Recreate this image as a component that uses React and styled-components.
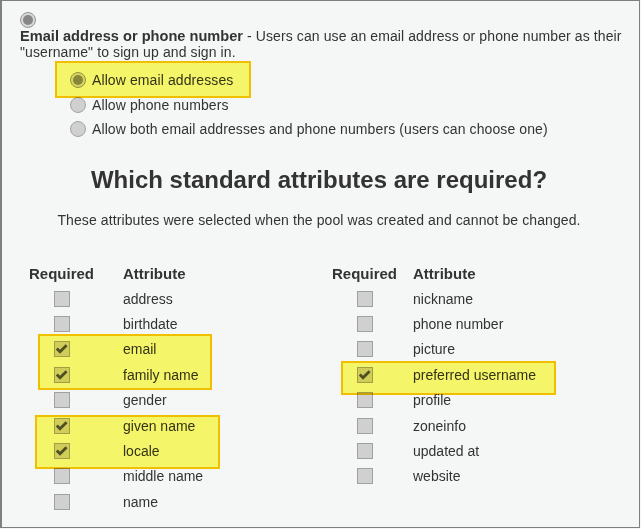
import React from "react";
import styled, { createGlobalStyle } from "styled-components";

const Global = createGlobalStyle`
  html, body { margin: 0; padding: 0; background: #f5f7f7; }
  * { box-sizing: border-box; }
`;

const Frame = styled.div`
  width: 640px;
  height: 528px;
  border: 1px solid #7f7f7f;
  border-left-width: 2px;
  background: #f5f7f7;
  padding: 11px 21px 0 18px;
  color: #333;
  font-family: "Liberation Sans", Arial, sans-serif;
  font-size: 14px;
  letter-spacing: 0.1px;
  overflow: hidden;
`;

const RadioDot = styled.span`
  display: ${(p) => (p.$block ? "flex" : "inline-flex")};
  align-items: center;
  justify-content: center;
  flex: none;
  width: 16px;
  height: 16px;
  border-radius: 50%;
  border: 1px solid ${(p) => (p.$checked ? "#969696" : "#a3a3a3")};
  background: ${(p) => (p.$checked ? "#d8d8d8" : "#d0d0d0")};
  &::after {
    content: "";
    display: ${(p) => (p.$checked ? "block" : "none")};
    width: 10px;
    height: 10px;
    border-radius: 50%;
    background: #878787;
  }
`;

const Intro = styled.p`
  margin: 0 -10px 0 0;
  line-height: 16px;
`;

const Lead = styled.b`
  font-size: 14.6px;
  letter-spacing: 0;
`;

const Options = styled.div`
  margin: 8px 0 0 50px;
  display: flex;
  flex-direction: column;
`;

const Option = styled.label`
  display: flex;
  align-items: center;
  gap: 6px;
  height: 24.5px;
  width: fit-content;
`;

const Highlight = styled.div`
  position: relative;
  &::after {
    content: "";
    position: absolute;
    top: ${(p) => p.$top}px;
    left: ${(p) => p.$left}px;
    width: ${(p) => p.$width}px;
    height: ${(p) => p.$height}px;
    background: rgb(255, 253, 109);
    border: 2px solid rgb(250, 198, 0);
    mix-blend-mode: multiply;
    pointer-events: none;
  }
`;

const Heading = styled.h2`
  margin: 24px 0 0;
  font-size: 24px;
  line-height: 28px;
  font-weight: bold;
  letter-spacing: 0;
  text-align: center;
`;

const Subtitle = styled.p`
  margin: 18px 0 0;
  line-height: 16px;
  text-align: center;
`;

const Tables = styled.div`
  margin-top: 33px;
  padding-left: 9px;
  display: grid;
  grid-template-columns: 303px 1fr;
`;

const Table = styled.div`
  display: flex;
  flex-direction: column;
`;

const Row = styled.div`
  display: grid;
  grid-template-columns: 65px auto;
  column-gap: ${(p) => p.$gap}px;
  align-items: center;
  height: 25.4px;
  white-space: nowrap;
  letter-spacing: 0;
`;

const HeadCell = styled.span`
  font-size: 15px;
  font-weight: bold;
`;

const Box = styled.span`
  justify-self: center;
  width: 16px;
  height: 16px;
  border: 1px solid #a0a0a0;
  background: #d0d0d0;
  display: flex;
  align-items: center;
  justify-content: center;
`;

const Check = ({ checked }) => (
  <Box>
    {checked && (
      <svg width="14" height="14" viewBox="0 0 14 14">
        <path d="M1.8 6.6 L5 9.8 L11.6 3.2" fill="none" stroke="#4f4f4f" strokeWidth="2.8" />
      </svg>
    )}
  </Box>
);

const AttrRow = ({ name, checked, gap }) => (
  <Row $gap={gap}>
    <Check checked={checked} />
    <span>{name}</span>
  </Row>
);

const AttrTable = ({ gap, groups }) => (
  <Table>
    <Row $gap={gap}>
      <HeadCell>Required</HeadCell>
      <HeadCell>Attribute</HeadCell>
    </Row>
    {groups.map((g, i) => {
      const rows = g.items.map((it) => (
        <AttrRow key={it} name={it} checked={!!g.mark} gap={gap} />
      ));
      return g.mark ? (
        <Highlight key={i} {...g.mark}>
          {rows}
        </Highlight>
      ) : (
        <React.Fragment key={i}>{rows}</React.Fragment>
      );
    })}
  </Table>
);

const leftGroups = [
  { items: ["address", "birthdate"] },
  { items: ["email", "family name"], mark: { $top: -3, $left: 9, $width: 170, $height: 52 } },
  { items: ["gender"] },
  { items: ["given name", "locale"], mark: { $top: 2, $left: 6, $width: 181, $height: 50 } },
  { items: ["middle name", "name"] },
];

const rightGroups = [
  { items: ["nickname", "phone number", "picture"] },
  { items: ["preferred username"], mark: { $top: -1.5, $left: 9, $width: 211, $height: 30 } },
  { items: ["profile", "zoneinfo", "updated at", "website"] },
];

export default function App() {
  return (
    <>
      <Global />
      <Frame>
        <RadioDot $checked $block />
        <Intro>
          <Lead>Email address or phone number</Lead> - Users can use an email address or phone
          number as their "username" to sign up and sign in.
        </Intro>
        <Options>
          <Highlight $top={-7} $left={-15} $width={192} $height={33}>
            <Option>
              <RadioDot $checked />
              Allow email addresses
            </Option>
          </Highlight>
          <Option>
            <RadioDot />
            Allow phone numbers
          </Option>
          <Option>
            <RadioDot />
            Allow both email addresses and phone numbers (users can choose one)
          </Option>
        </Options>
        <Heading>Which standard attributes are required?</Heading>
        <Subtitle>
          These attributes were selected when the pool was created and cannot be changed.
        </Subtitle>
        <Tables>
          <AttrTable gap={29} groups={leftGroups} />
          <AttrTable gap={16} groups={rightGroups} />
        </Tables>
      </Frame>
    </>
  );
}
